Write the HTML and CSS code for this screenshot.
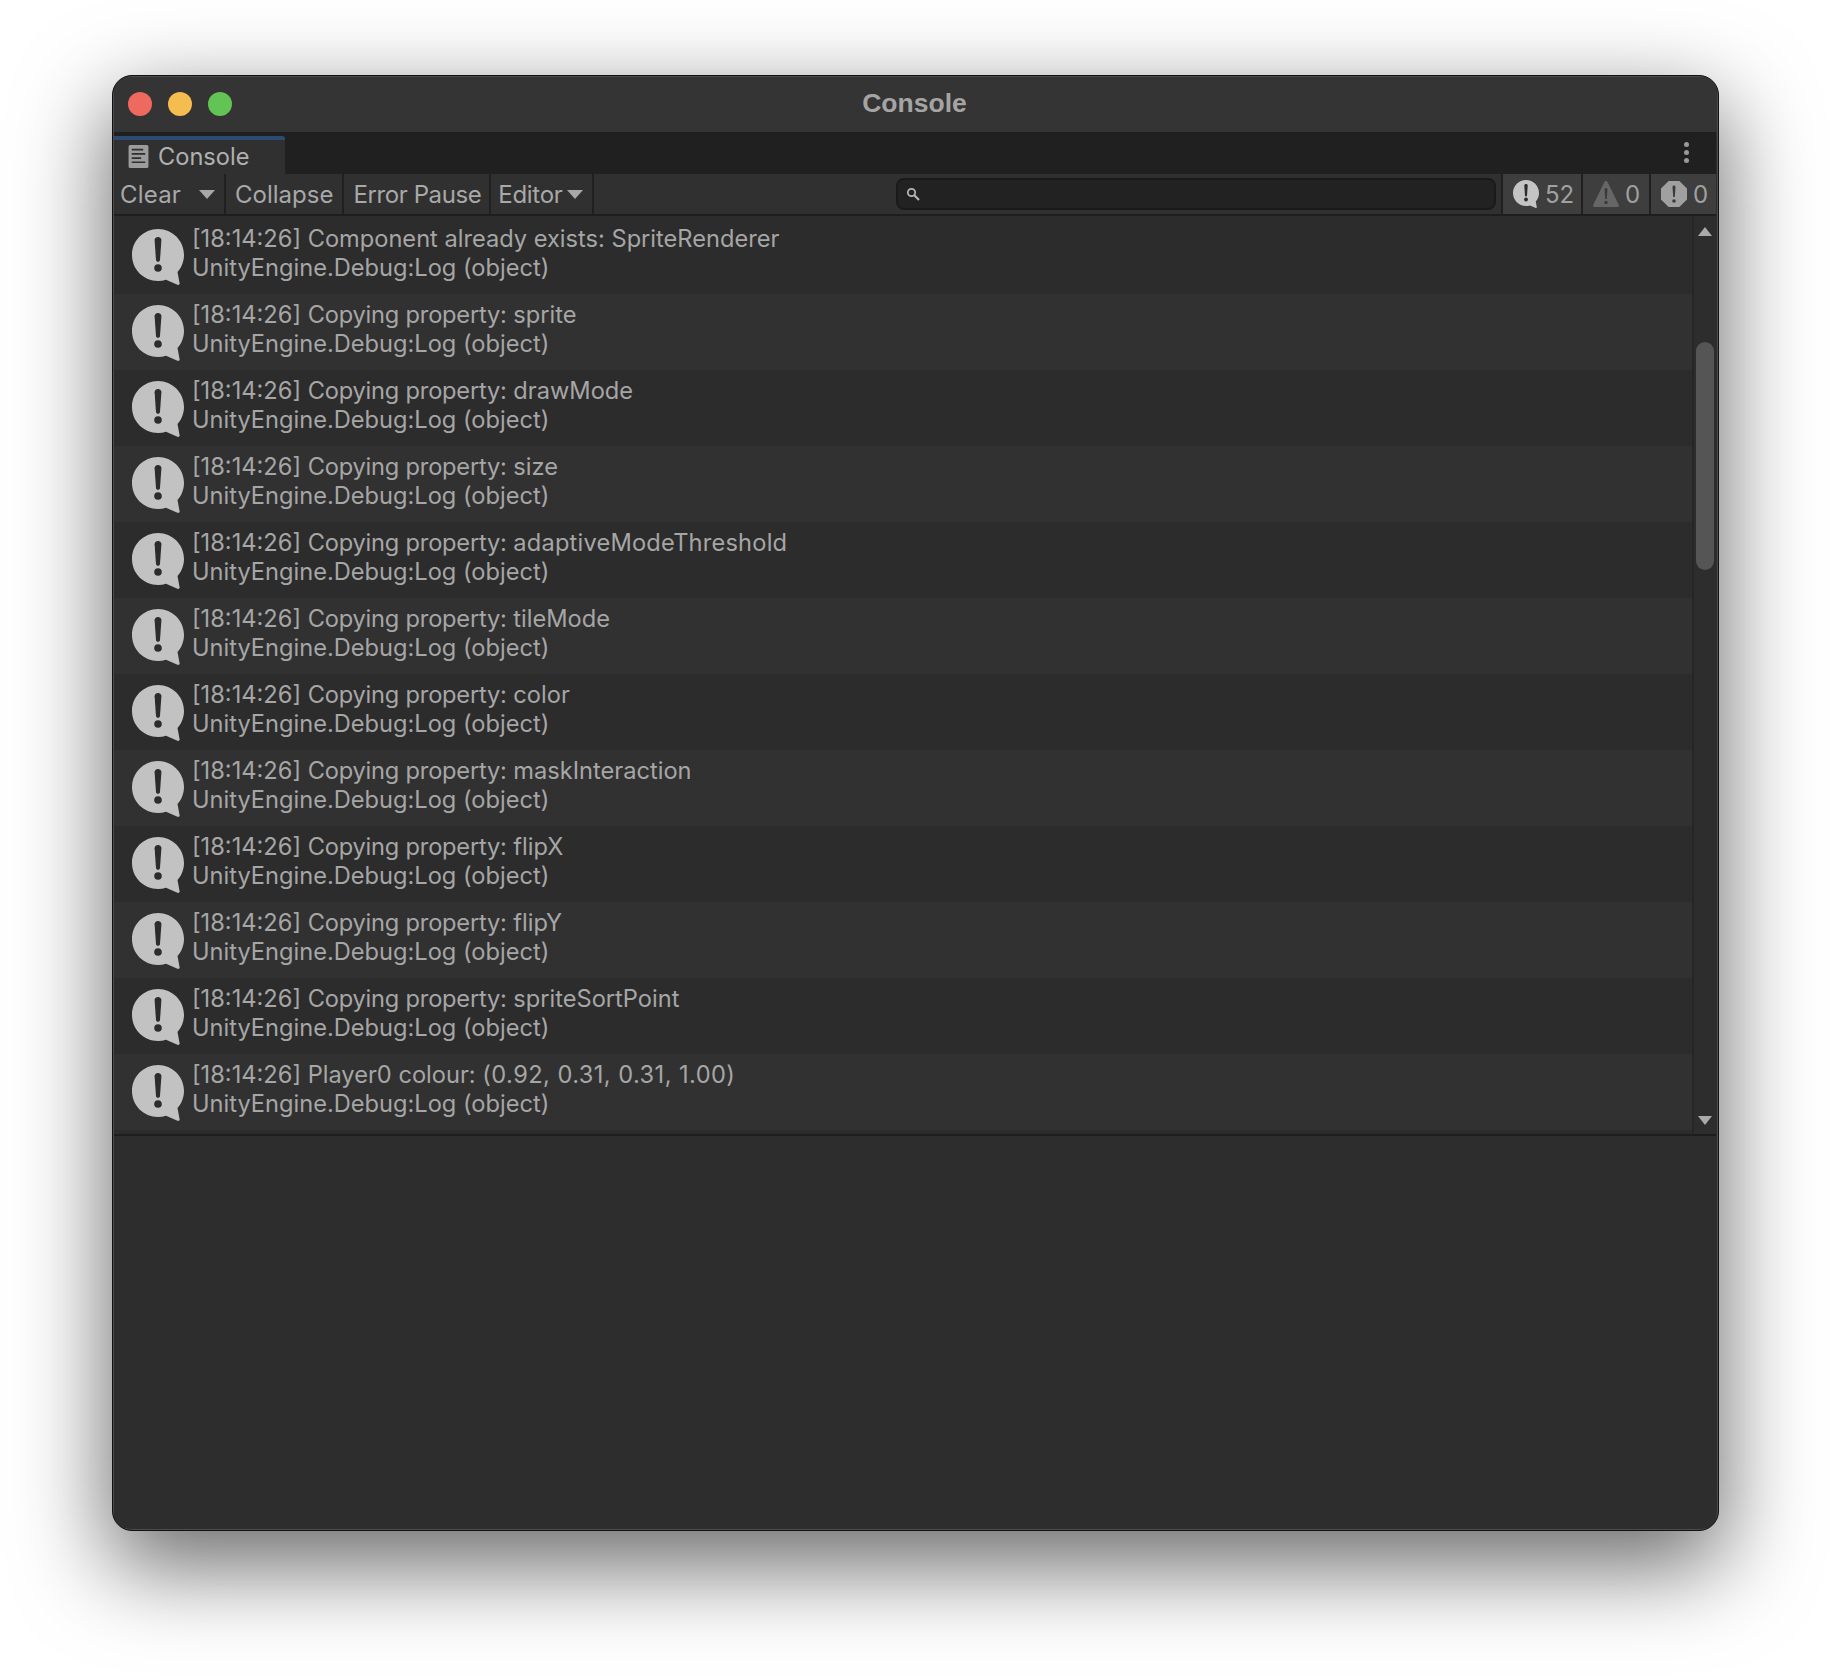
FILE: index.html
```html
<!DOCTYPE html>
<html lang="en">
<head>
<meta charset="utf-8">
<title>Console</title>
<link rel="stylesheet" href="styles.css">
</head>
<body>
<svg class="defs" width="0" height="0" aria-hidden="true">
  <symbol id="info" viewBox="0 0 52 56">
    <path d="M26 0C11.600 0 0 11.600 0 26S11.600 52 26 52c2.800 0 5.500-.4 8-1.200L45.500 55.800C46.800 56.300 47.800 55.500 47.600 54.200L45.500 43.100C49.500 38.500 52 32.500 52 26 52 11.600 40.400 0 26 0Z" fill="currentColor"/>
    <path d="M26 8c2 0 3.500 1.400 3.400 3.300L28 31c-.1 1-.9 1.800-2 1.800s-1.900-.8-2-1.800L22.600 11.300C22.500 9.400 24 8 26 8Z" fill="#2c2c2c"/>
    <circle cx="26" cy="39" r="3.800" fill="#2c2c2c"/>
  </symbol>
</svg>
<main class="window">
  <header class="titlebar">
    <div class="lights"><i class="light red"></i><i class="light yellow"></i><i class="light green"></i></div>
    <div class="title">Console</div>
  </header>
  <div class="tabbar">
    <div class="tab">
      <svg class="tab-icon" viewBox="0 0 19 22"><path d="M1.500 0H17.500A1.500 1.500 0 0 1 19 1.500V20.500A1.500 1.500 0 0 1 17.500 22H1.500A1.500 1.500 0 0 1 0 20.500V1.500A1.500 1.500 0 0 1 1.500 0Z" fill="#9c9c9c"/><path d="M3 4.500H14M3 8.500H16M3 12.500H12M3 16.500H16" stroke="#2f2f2f" stroke-width="1.600"/></svg>
      <span>Console</span>
    </div>
    <div class="kebab"><i></i><i></i><i></i></div>
  </div>
  <div class="toolbar">
    <div class="tool clear"><span>Clear</span><b class="sep"></b><b class="caret"></b></div>
    <div class="tool">Collapse</div>
    <div class="tool pause">Error Pause</div>
    <div class="tool editor"><span>Editor</span><b class="caret"></b></div>
    <div class="search-wrap">
      <div class="search">
        <svg class="search-icon" viewBox="0 0 14 14"><circle cx="5.500" cy="5.500" r="3.700" fill="none" stroke="#b4b4b4" stroke-width="1.800"/><path d="M8.300 8.300 13 13" stroke="#b4b4b4" stroke-width="2.200"/></svg>
      </div>
    </div>
    <div class="badge b1"><svg class="badge-icon info-sm"><use href="#info"/></svg><span>52</span></div>
    <div class="badge b2">
      <svg class="badge-icon" viewBox="0 0 26 26"><path d="M13 0c.7 0 1.300.4 1.600 1L25.800 24c.4.900-.2 2-1.300 2H1.500c-1.100 0-1.700-1.100-1.300-2L11.400 1c.3-.6.900-1 1.600-1Z" fill="#666"/><path d="M13 7c.9 0 1.500.6 1.500 1.500L13.800 18h-1.600l-.7-9.500C11.500 7.600 12.100 7 13 7Z" fill="#3b3b3b"/><circle cx="13" cy="21.500" r="1.700" fill="#3b3b3b"/></svg>
      <span>0</span>
    </div>
    <div class="badge b3">
      <svg class="badge-icon" viewBox="0 0 26 26"><path d="M7.600 0H18.400L26 7.600V18.400L18.400 26H7.600L0 18.400V7.600Z" fill="#a0a0a0"/><path d="M13 4.500c.9 0 1.500.6 1.500 1.500L13.800 16h-1.600L11.500 6c0-.9.600-1.500 1.500-1.500Z" fill="#3b3b3b"/><circle cx="13" cy="20" r="1.800" fill="#3b3b3b"/></svg>
      <span>0</span>
    </div>
  </div>
  <section class="list-pane">
    <div class="rows">
      <div class="row"><svg class="row-icon"><use href="#info"/></svg><div class="msg"><p>[18:14:26] Component already exists: SpriteRenderer</p><p>UnityEngine.Debug:Log (object)</p></div></div>
      <div class="row alt"><svg class="row-icon"><use href="#info"/></svg><div class="msg"><p>[18:14:26] <span class="cp">Copying property:</span> sprite</p><p>UnityEngine.Debug:Log (object)</p></div></div>
      <div class="row"><svg class="row-icon"><use href="#info"/></svg><div class="msg"><p>[18:14:26] <span class="cp">Copying property:</span> drawMode</p><p>UnityEngine.Debug:Log (object)</p></div></div>
      <div class="row alt"><svg class="row-icon"><use href="#info"/></svg><div class="msg"><p>[18:14:26] <span class="cp">Copying property:</span> size</p><p>UnityEngine.Debug:Log (object)</p></div></div>
      <div class="row"><svg class="row-icon"><use href="#info"/></svg><div class="msg"><p>[18:14:26] <span class="cp">Copying property:</span> <span class="wide">adaptiveModeThreshold</span></p><p>UnityEngine.Debug:Log (object)</p></div></div>
      <div class="row alt"><svg class="row-icon"><use href="#info"/></svg><div class="msg"><p>[18:14:26] <span class="cp">Copying property:</span> tileMode</p><p>UnityEngine.Debug:Log (object)</p></div></div>
      <div class="row"><svg class="row-icon"><use href="#info"/></svg><div class="msg"><p>[18:14:26] <span class="cp">Copying property:</span> color</p><p>UnityEngine.Debug:Log (object)</p></div></div>
      <div class="row alt"><svg class="row-icon"><use href="#info"/></svg><div class="msg"><p>[18:14:26] <span class="cp">Copying property:</span> maskInteraction</p><p>UnityEngine.Debug:Log (object)</p></div></div>
      <div class="row"><svg class="row-icon"><use href="#info"/></svg><div class="msg"><p>[18:14:26] <span class="cp">Copying property:</span> flipX</p><p>UnityEngine.Debug:Log (object)</p></div></div>
      <div class="row alt"><svg class="row-icon"><use href="#info"/></svg><div class="msg"><p>[18:14:26] <span class="cp">Copying property:</span> flipY</p><p>UnityEngine.Debug:Log (object)</p></div></div>
      <div class="row"><svg class="row-icon"><use href="#info"/></svg><div class="msg"><p>[18:14:26] <span class="cp">Copying property:</span> spriteSortPoint</p><p>UnityEngine.Debug:Log (object)</p></div></div>
      <div class="row alt"><svg class="row-icon"><use href="#info"/></svg><div class="msg"><p>[18:14:26] Player0 colour: <span class="nums">(0.92, 0.31, 0.31, 1.00)</span></p><p>UnityEngine.Debug:Log (object)</p></div></div>
    </div>
    <div class="scrollbar">
      <b class="arrow up"></b>
      <div class="track"><div class="thumb"></div></div>
      <b class="arrow down"></b>
    </div>
  </section>
  <section class="detail-pane"></section>
</main>
</body>
</html>
```
FILE: styles.css
```css
* { box-sizing: border-box; }
html, body { margin: 0; height: 100%; }
body {
  background: #fff;
  padding: 75px 111px 147px 112px;
  font-family: Inter, "Liberation Sans", sans-serif;
  font-size: 24px;
  color: #b4b4b4;
  overflow: hidden;
}
.defs { position: absolute; }
.window {
  height: 1456px;
  display: flex;
  flex-direction: column;
  background: #2d2d2d;
  border-radius: 20px;
  border: 1px solid #111;
  box-shadow: inset 0 0 0 1px #4c4c4c, 0 32px 90px 4px rgba(0, 0, 0, .58);
  overflow: hidden;
  padding: 1px 2px 2px 1px;
}
.titlebar {
  height: 55px;
  flex: none;
  margin-right: -1px;
  background: #343434;
  display: flex;
  align-items: center;
  position: relative;
  padding: 0 0 2px 14px;
}
.lights { display: flex; gap: 16px; }
.light { width: 24px; height: 24px; border-radius: 50%; display: block; }
.red { background: #ee6a5f; }
.yellow { background: #f5bd4f; }
.green { background: #61c454; }
.title {
  position: absolute;
  left: 0; right: 0;
  padding-right: 2px;
  text-align: center;
  font-size: 26.500px;
  font-weight: 700;
  color: #a4a4a4;
  font-family: "Liberation Sans", Inter, sans-serif;
}
.tabbar {
  height: 42px;
  flex: none;
  background: #202020;
  display: flex;
  justify-content: space-between;
  align-items: flex-end;
}
.tab {
  width: 171px;
  height: 38px;
  background: #303030;
  border-top: 4px solid #2c4a72;
  border-top-right-radius: 3px;
  display: flex;
  align-items: center;
  padding: 0 0 2px 14px;
  gap: 9px;
  color: #b0b0b0;
  font-size: 23.600px;
}
.tab-icon { width: 21px; height: 23px; }
.kebab { display: flex; flex-direction: column; gap: 3px; padding: 0 27px 2px 0; align-self: center; }
.kebab i { width: 5px; height: 5px; border-radius: 50%; background: #999; display: block; }
.toolbar {
  height: 42px;
  flex: none;
  display: flex;
  background: #303030;
  border-bottom: 2px solid #1e1e1e;
  align-items: stretch;
}
.tool {
  display: flex;
  align-items: center;
  padding: 0 9px;
  border-right: 2px solid #202020;
  color: #a8a8a8;
  white-space: nowrap;
}
.clear { padding-left: 6px; width: 112px; }
.clear span { letter-spacing: .2px; }
.clear .sep { width: 1px; height: 24px; background: #222; margin-left: 9px; }
.clear .caret { margin-left: 9px; }
.pause { letter-spacing: -.4px; padding-right: 8px; }
.caret {
  display: block;
  width: 0; height: 0;
  border-left: 8px solid transparent;
  border-right: 8px solid transparent;
  border-top: 9px solid #a8a8a8;
}
.editor { padding: 0 9px 0 7px; letter-spacing: -.3px; }
.editor .caret { margin-left: 5px; }
.search-wrap {
  flex: 1;
  display: flex;
  align-items: center;
  justify-content: flex-end;
  padding-right: 5px;
  border-right: 2px solid #202020;
}
.search {
  width: 600px;
  height: 32px;
  background: #222;
  border: 2px solid #1a1a1a;
  border-radius: 8px;
  display: flex;
  align-items: center;
  padding-left: 8px;
}
.search-icon { width: 14px; height: 14px; }
.badge {
  background: #3e3e3e;
  display: flex;
  align-items: center;
  gap: 6px;
  padding-left: 10px;
  border-right: 2px solid #202020;
  color: #a0a0a0;
}
.badge:last-child { border-right: 0; }
.b1 { width: 80px; }
.b2 { width: 68px; }
.b3 { width: 65px; }
.badge-icon { width: 26px; height: 26px; flex: none; }
.info-sm { width: 26px; height: 28px; color: #c4c4c4; }
.list-pane {
  height: 920px;
  flex: none;
  display: flex;
  border-bottom: 2px solid #1e1e1e;
}
.rows { flex: 1; display: flex; flex-direction: column; background: #2c2c2c; padding-top: 2px; }
.row {
  height: 76px;
  flex: none;
  background: #2c2c2c;
  display: flex;
  align-items: center;
  padding: 0 0 6px 18px;
  gap: 8px;
}
.row.alt { background: #313131; }
.row-icon { width: 52px; height: 56px; flex: none; color: #c2c2c2; margin-top: 8px; }
.msg p {
  margin: 0;
  line-height: 29px;
  font-size: 23.640px;
  color: #a6a6a6;
  white-space: nowrap;
}
.cp { letter-spacing: -.2px; }
.wide { letter-spacing: .2px; }
.nums { letter-spacing: .44px; }
.scrollbar {
  width: 24px;
  flex: none;
  border-left: 2px solid #262626;
  background: #2d2d2d;
  display: flex;
  flex-direction: column;
  align-items: center;
  padding: 11px 0 9px;
}
.track { flex: 1; width: 18px; padding-top: 106px; }
.thumb { height: 228px; background: #555; border-radius: 9px; }
.arrow { display: block; width: 0; height: 0; border-left: 7px solid transparent; border-right: 7px solid transparent; }
.arrow.up { border-bottom: 9px solid #aaa; }
.arrow.down { border-top: 9px solid #aaa; }
.detail-pane { flex: 1; background: #2d2d2d; }
```
